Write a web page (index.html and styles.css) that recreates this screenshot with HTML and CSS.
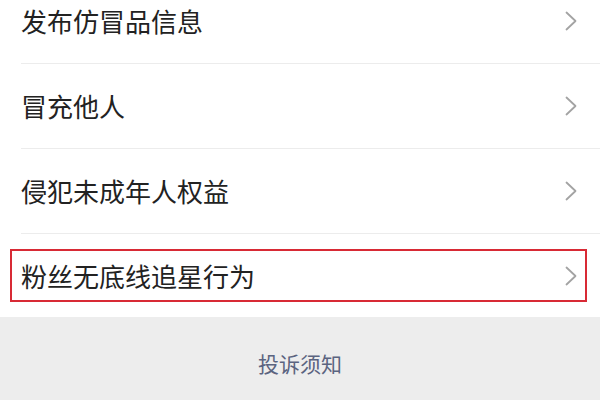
FILE: index.html
```html
<!DOCTYPE html>
<html lang="zh">
<head>
<meta charset="utf-8">
<link rel="stylesheet" href="styles.css">
</head>
<body>
<div class="page">
  <ul class="list">
    <li class="row first"><span class="label">发布仿冒品信息</span><svg class="chev" viewBox="0 0 12 20"><path d="M1.5 1.5 L10.5 10 L1.5 18.5"/></svg></li>
    <li class="row"><span class="label">冒充他人</span><svg class="chev" viewBox="0 0 12 20"><path d="M1.5 1.5 L10.5 10 L1.5 18.5"/></svg></li>
    <li class="row"><span class="label">侵犯未成年人权益</span><svg class="chev" viewBox="0 0 12 20"><path d="M1.5 1.5 L10.5 10 L1.5 18.5"/></svg></li>
    <li class="row last"><span class="label">粉丝无底线追星行为</span><svg class="chev" viewBox="0 0 12 20"><path d="M1.5 1.5 L10.5 10 L1.5 18.5"/></svg><span class="mark"></span></li>
  </ul>
  <div class="footer"><span class="notice">投诉须知</span></div>
</div>
</body>
</html>
```
FILE: styles.css
```css
html, body {
  margin: 0;
  padding: 0;
  background: #ffffff;
}
body {
  width: 600px;
  height: 400px;
  overflow: hidden;
  font-family: "Noto Sans CJK SC", "Noto Sans", sans-serif;
}
.page {
  display: flex;
  flex-direction: column;
}
.list {
  list-style: none;
  margin: -21px 0 0 0;
  padding: 0 0 0 21px;
  background: #ffffff;
}
.row {
  position: relative;
  height: 84px;
  display: flex;
  align-items: center;
  justify-content: space-between;
  padding-right: 23px;
  border-bottom: 1px solid #ececec;
}
.row.first { height: 84px; }
.row.last {
  border-bottom: none;
  height: 83px;
}
.label {
  font-size: 26px;
  color: #222222;
  line-height: 1;
}
.chev {
  width: 12px;
  height: 20px;
  fill: none;
  stroke: #a3a3a3;
  stroke-width: 1.8;
  stroke-linecap: round;
  stroke-linejoin: round;
}
.mark {
  position: absolute;
  left: -11px;
  top: 15px;
  width: 573px;
  height: 49px;
  border: 2px solid #d82a35;
}
.footer {
  height: 84px;
  background: #ededed;
  display: flex;
  justify-content: center;
  align-items: center;
}
.notice {
  font-size: 21px;
  color: #5b6480;
  line-height: 1;
  margin-top: 8px;
}
```
